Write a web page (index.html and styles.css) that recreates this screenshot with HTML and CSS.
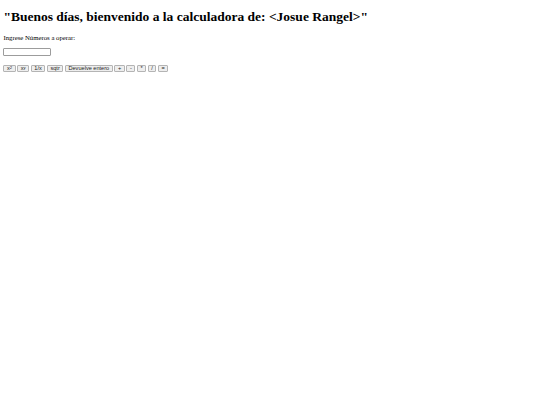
FILE: index.html
```html
<!DOCTYPE html>
<html lang="es">
<head>
<meta charset="utf-8">
<title>Calculadora</title>
<link rel="stylesheet" href="styles.css">
</head>
<body>
<h1 class="title">"Buenos días, bienvenido a la calculadora de: &lt;Josue Rangel&gt;"</h1>
<p class="label">Ingrese Números a operar:</p>
<input class="num" type="text">
<div class="ops">
<button class="btn">x<sup>2</sup></button>
<button class="btn">x<sup>y</sup></button>
<button class="btn">1/x</button>
<button class="btn">sqtr</button>
<button class="btn">Devuelve entero</button>
<button class="btn">+</button>
<button class="btn">-</button>
<button class="btn">*</button>
<button class="btn">/</button>
<button class="btn">=</button>
</div>
</body>
</html>
```
FILE: styles.css
```css
body {
  margin: 3.4px;
  font-family: "Liberation Serif", serif;
  font-size: 6.75px;
  background: #fff;
  color: #000;
}
.title {
  font-size: 13.5px;
  font-weight: bold;
  margin: 5.5px 0 9px;
}
.label {
  margin: 6.75px 0;
}
.num {
  display: block;
  box-sizing: border-box;
  width: 48px;
  height: 8.5px;
  margin: 0;
  padding: 0 1px;
  border: 1px solid #9c9c9c;
  border-radius: 1px;
  background: #fff;
  font-family: "Liberation Sans", sans-serif;
  font-size: 5.6px;
}
.ops {
  display: flex;
  align-items: flex-start;
  gap: 1.7px;
  margin-top: 8.5px;
}
.btn {
  box-sizing: border-box;
  height: 7.6px;
  margin: 0;
  padding: 0 2.5px;
  border: 1px solid #b4b4b4;
  border-radius: 1px;
  background: #eeeeee;
  color: #222;
  font-family: "Liberation Sans", sans-serif;
  font-size: 5.6px;
  line-height: 5.6px;
}
.btn sup {
  font-size: 0.75em;
  line-height: 0;
  vertical-align: 1.5px;
}
```
